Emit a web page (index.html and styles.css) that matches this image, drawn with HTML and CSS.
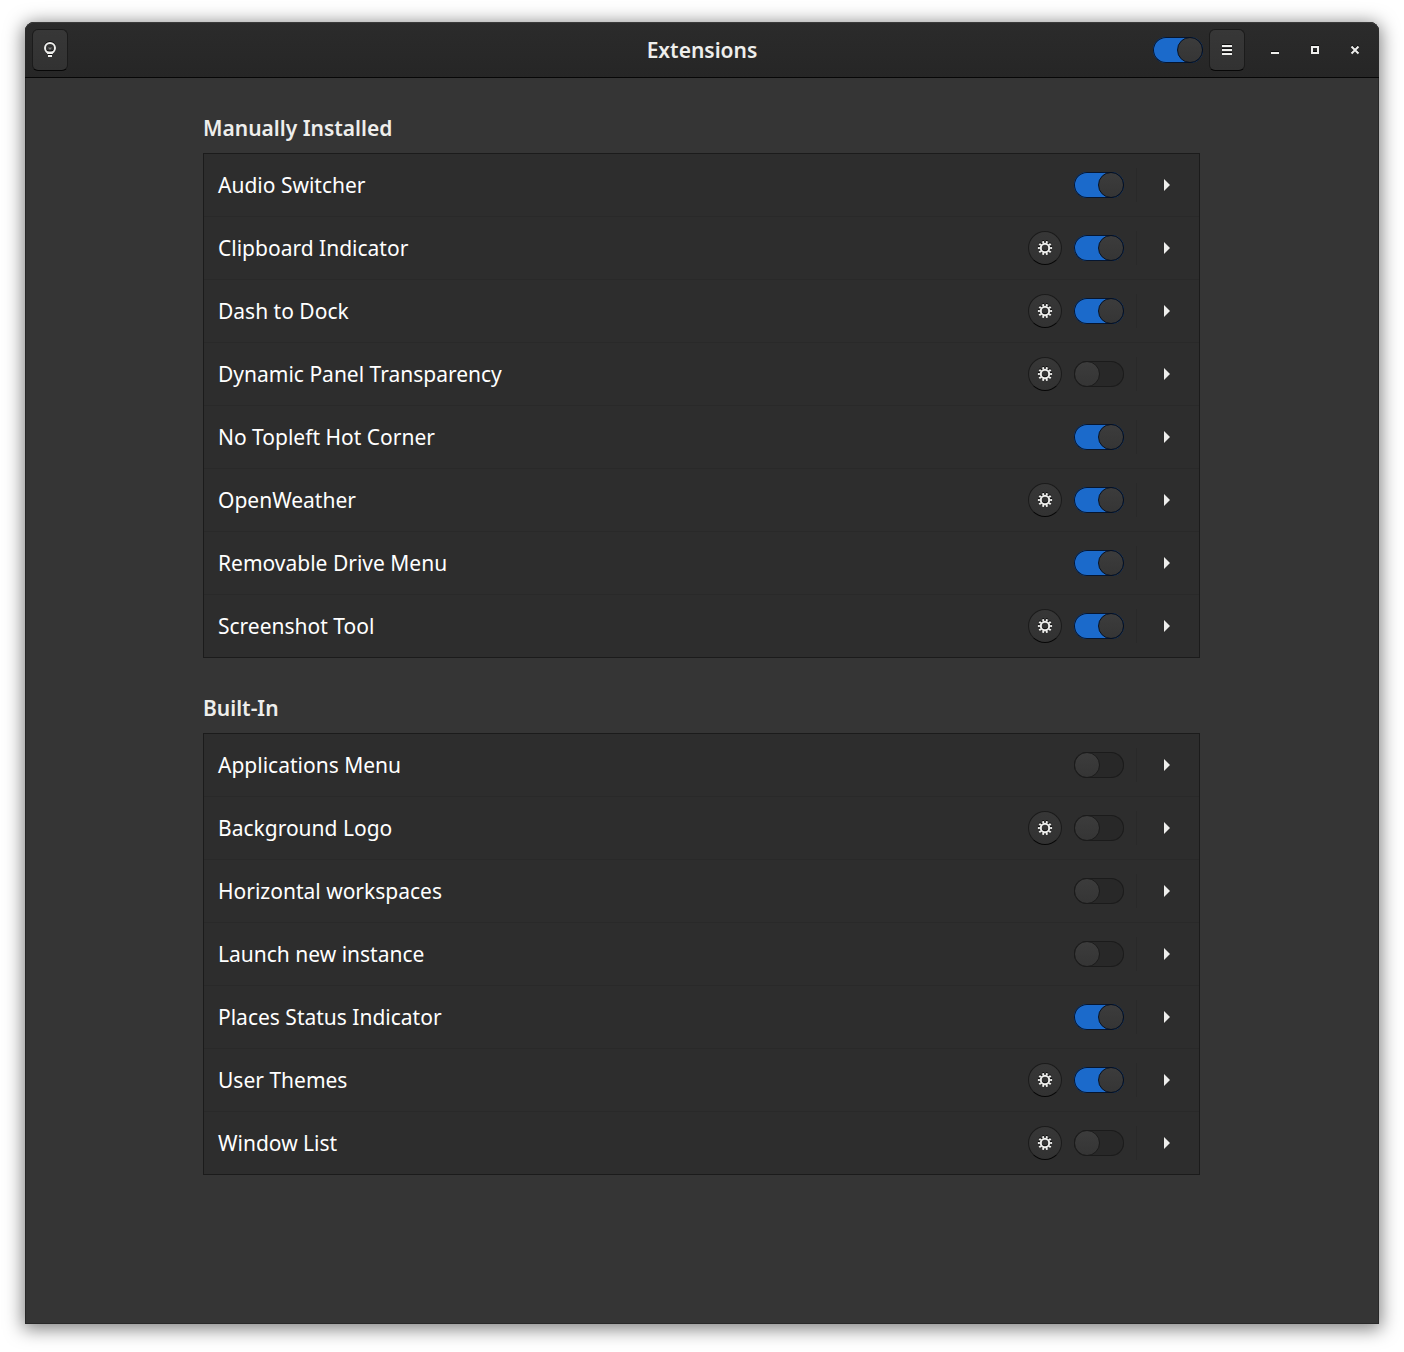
FILE: index.html
```html
<!DOCTYPE html>
<html lang="en">
<head>
<meta charset="utf-8">
<meta name="viewport" content="width=device-width, initial-scale=1">
<title>Extensions</title>
<link rel="stylesheet" href="styles.css">
</head>
<body>
<svg class="sprite" aria-hidden="true">
  <symbol id="gear" viewBox="0 0 16 16">
    <circle cx="8" cy="8" r="4.2" fill="none" stroke="currentColor" stroke-width="2"/>
    <circle cx="8" cy="8" r="6" fill="none" stroke="currentColor" stroke-width="2.2" pathLength="100" stroke-dasharray="5 5" stroke-dashoffset="2.5"/>
  </symbol>
  <symbol id="arrow" viewBox="0 0 16 16"><path d="M5 2v12l6-6z" fill="currentColor"/></symbol>
</svg>
<div class="window">
  <header class="titlebar">
    <div class="start">
      <button class="tool" aria-label="Tips"><svg class="icon" viewBox="0 0 16 16"><circle cx="8" cy="6" r="5" fill="none" stroke="currentColor" stroke-width="2"/><path d="M6 5.500h4L8.600 7.500H7.400z" fill="currentColor" opacity=".4"/><path d="M4 9.500h8L10.500 12h-5zM6 13h4v2H6z" fill="currentColor"/></svg></button>
    </div>
    <h1>Extensions</h1>
    <div class="end">
      <input type="checkbox" role="switch" class="switch" aria-label="Extensions" checked>
      <button class="tool" aria-label="Menu"><svg class="icon" viewBox="0 0 16 16"><path d="M3 3h10v2H3zM3 7h10v2H3zM3 11h10v2H3z" fill="currentColor"/></svg></button>
      <div class="controls">
        <button class="control" aria-label="Minimize"><svg class="icon" viewBox="0 0 16 16"><path d="M4 10h8v2H4z" fill="currentColor"/></svg></button>
        <button class="control" aria-label="Maximize"><svg class="icon" viewBox="0 0 16 16"><path d="M5 5h6v6H5z" fill="none" stroke="currentColor" stroke-width="2"/></svg></button>
        <button class="control" aria-label="Close"><svg class="icon" viewBox="0 0 16 16"><path d="M4.500 4.500l7 7M11.500 4.500l-7 7" fill="none" stroke="currentColor" stroke-width="2"/></svg></button>
      </div>
    </div>
  </header>
  <main class="content">
    <section>
      <h2>Manually Installed</h2>
      <ul class="list">
        <li class="row"><label for="e1">Audio Switcher</label><input type="checkbox" role="switch" class="switch" id="e1" checked><button class="expand" aria-label="Details"><svg class="icon"><use href="#arrow"/></svg></button></li>
        <li class="row"><label for="e2">Clipboard Indicator</label><button class="prefs" aria-label="Settings"><svg class="icon"><use href="#gear"/></svg></button><input type="checkbox" role="switch" class="switch" id="e2" checked><button class="expand" aria-label="Details"><svg class="icon"><use href="#arrow"/></svg></button></li>
        <li class="row"><label for="e3">Dash to Dock</label><button class="prefs" aria-label="Settings"><svg class="icon"><use href="#gear"/></svg></button><input type="checkbox" role="switch" class="switch" id="e3" checked><button class="expand" aria-label="Details"><svg class="icon"><use href="#arrow"/></svg></button></li>
        <li class="row"><label for="e4">Dynamic Panel Transparency</label><button class="prefs" aria-label="Settings"><svg class="icon"><use href="#gear"/></svg></button><input type="checkbox" role="switch" class="switch" id="e4"><button class="expand" aria-label="Details"><svg class="icon"><use href="#arrow"/></svg></button></li>
        <li class="row"><label for="e5">No Topleft Hot Corner</label><input type="checkbox" role="switch" class="switch" id="e5" checked><button class="expand" aria-label="Details"><svg class="icon"><use href="#arrow"/></svg></button></li>
        <li class="row"><label for="e6">OpenWeather</label><button class="prefs" aria-label="Settings"><svg class="icon"><use href="#gear"/></svg></button><input type="checkbox" role="switch" class="switch" id="e6" checked><button class="expand" aria-label="Details"><svg class="icon"><use href="#arrow"/></svg></button></li>
        <li class="row"><label for="e7">Removable Drive Menu</label><input type="checkbox" role="switch" class="switch" id="e7" checked><button class="expand" aria-label="Details"><svg class="icon"><use href="#arrow"/></svg></button></li>
        <li class="row"><label for="e8">Screenshot Tool</label><button class="prefs" aria-label="Settings"><svg class="icon"><use href="#gear"/></svg></button><input type="checkbox" role="switch" class="switch" id="e8" checked><button class="expand" aria-label="Details"><svg class="icon"><use href="#arrow"/></svg></button></li>
      </ul>
    </section>
    <section>
      <h2>Built-In</h2>
      <ul class="list">
        <li class="row"><label for="b1">Applications Menu</label><input type="checkbox" role="switch" class="switch" id="b1"><button class="expand" aria-label="Details"><svg class="icon"><use href="#arrow"/></svg></button></li>
        <li class="row"><label for="b2">Background Logo</label><button class="prefs" aria-label="Settings"><svg class="icon"><use href="#gear"/></svg></button><input type="checkbox" role="switch" class="switch" id="b2"><button class="expand" aria-label="Details"><svg class="icon"><use href="#arrow"/></svg></button></li>
        <li class="row"><label for="b3">Horizontal workspaces</label><input type="checkbox" role="switch" class="switch" id="b3"><button class="expand" aria-label="Details"><svg class="icon"><use href="#arrow"/></svg></button></li>
        <li class="row"><label for="b4">Launch new instance</label><input type="checkbox" role="switch" class="switch" id="b4"><button class="expand" aria-label="Details"><svg class="icon"><use href="#arrow"/></svg></button></li>
        <li class="row"><label for="b5">Places Status Indicator</label><input type="checkbox" role="switch" class="switch" id="b5" checked><button class="expand" aria-label="Details"><svg class="icon"><use href="#arrow"/></svg></button></li>
        <li class="row"><label for="b6">User Themes</label><button class="prefs" aria-label="Settings"><svg class="icon"><use href="#gear"/></svg></button><input type="checkbox" role="switch" class="switch" id="b6" checked><button class="expand" aria-label="Details"><svg class="icon"><use href="#arrow"/></svg></button></li>
        <li class="row"><label for="b7">Window List</label><button class="prefs" aria-label="Settings"><svg class="icon"><use href="#gear"/></svg></button><input type="checkbox" role="switch" class="switch" id="b7"><button class="expand" aria-label="Details"><svg class="icon"><use href="#arrow"/></svg></button></li>
      </ul>
    </section>
  </main>
</div>
</body>
</html>
```

FILE: styles.css
```css
*, *::before { box-sizing: border-box; }

body {
  margin: 0;
  min-height: 100vh;
  padding: 22px 25px 28px;
  display: flex;
  background: #fff;
  color: #eeeeec;
  font-family: "Noto Sans", sans-serif;
  font-size: 21px;
  line-height: 30px;
}

.sprite { display: none; }

.window {
  flex: 1;
  min-width: 0;
  background: #353535;
  border-radius: 9px 9px 0 0;
  box-shadow: inset 0 0 0 1px #282828, 0 3px 18px 2px rgba(0, 0, 0, .5);
}

.titlebar {
  display: grid;
  grid-template-columns: 1fr auto 1fr;
  align-items: center;
  height: 56px;
  padding: 0 4px;
  background: linear-gradient(#2b2b2b, #262626);
  border-bottom: 1px solid #070707;
  border-radius: 9px 9px 0 0;
  box-shadow: inset 0 1px #3a3a3a;
}

h1, h2 {
  margin: 0;
  font-size: 21px;
  line-height: 30px;
  font-weight: 600;
}

.start { padding-left: 3px; }

.end {
  display: flex;
  align-items: center;
  justify-content: flex-end;
  gap: 6px;
}

.controls {
  display: flex;
  padding-left: 4px;
}

button {
  display: flex;
  align-items: center;
  justify-content: center;
  flex: none;
  padding: 0;
  border: 0;
  background: none;
  color: #eeeeec;
}

.icon {
  display: block;
  width: 16px;
  height: 16px;
  filter: drop-shadow(0 -1px rgba(0, 0, 0, .7));
}

.tool {
  width: 36px;
  height: 42px;
  background: linear-gradient(#373737, #323232);
  border: 1px solid #1b1b1b;
  border-bottom-color: #070707;
  border-radius: 6px;
}

.control {
  width: 40px;
  height: 40px;
}

.switch {
  appearance: none;
  display: flex;
  flex: none;
  width: 50px;
  height: 26px;
  margin: 0;
  background: #282828;
  border-radius: 13px;
  box-shadow: inset 0 0 0 1px #1b1b1b;
}

.switch::before {
  content: "";
  width: 26px;
  height: 26px;
  background: linear-gradient(#3c3c3c, #353535);
  border: 1px solid #1b1b1b;
  border-radius: 50%;
}

.switch:checked {
  justify-content: flex-end;
  background: #1b6acb;
  box-shadow: inset 0 0 0 1px #061630;
}

.switch:checked::before { border-color: #07101f; }

.content {
  max-width: 998px;
  margin: 0 auto;
  padding: 35px 1px 35px 0;
  display: grid;
  gap: 35px;
}

.list {
  list-style: none;
  margin: 10px 0 0;
  padding: 0;
  background: #2d2d2d;
  border: 1px solid #1b1b1b;
}

.row {
  display: flex;
  align-items: center;
  gap: 12px;
  height: 63px;
  padding: 0 14px;
  border-bottom: 1px solid #292929;
  color: #fff;
}

.row:last-child {
  height: 62px;
  border-bottom: 0;
}

.row label { flex: 1; }

.prefs {
  width: 34px;
  height: 34px;
  background: linear-gradient(#373737, #323232);
  border: 1px solid #1b1b1b;
  border-bottom-color: #070707;
  border-radius: 50%;
}

.expand {
  width: 49px;
  height: 34px;
  padding-left: 12px;
  border-left: 1px solid #292929;
}

.expand .icon { filter: none; }
```
